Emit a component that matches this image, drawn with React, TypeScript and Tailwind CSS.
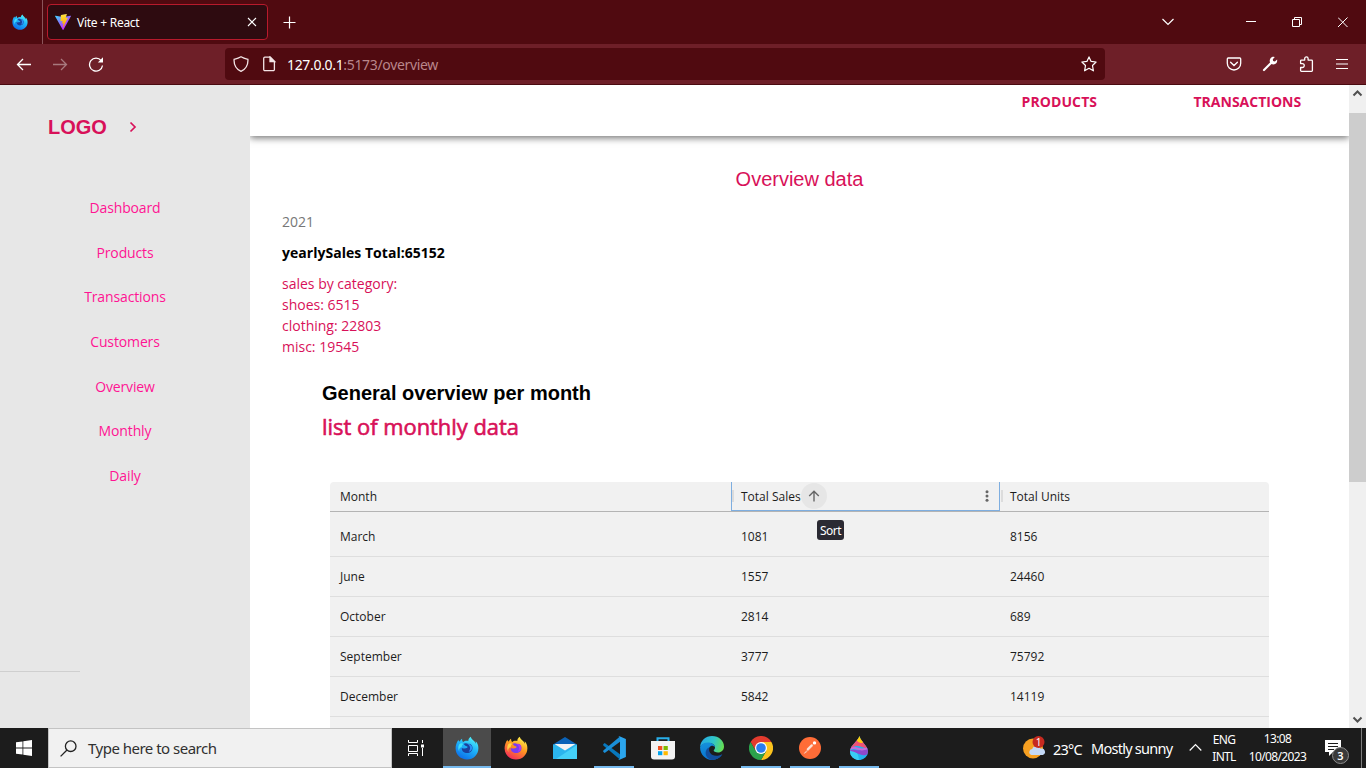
import React, { useId } from "react";

const UI = "font-['Open_Sans',sans-serif]";
const SYS = "font-['Noto_Sans',sans-serif]";
const ARIAL = "font-['Liberation_Sans',sans-serif]";

function Firefox({ size, blue = false }: { size: number; blue?: boolean }) {
  const id = useId();
  const c = blue
    ? ["#4ff0fa", "#1fb4f8", "#0b6ae8", "#1a3f9c", "#2a8ff5"]
    : ["#fff04d", "#ff9a1f", "#f5245d", "#7a3cf0", "#b03af0"];
  return (
    <svg width={size} height={size} viewBox="0 0 24 24" className="shrink-0">
      <defs>
        <linearGradient id={id} x1="0.8" y1="0" x2="0.25" y2="1">
          <stop offset="0.05" stopColor={c[0]} />
          <stop offset="0.45" stopColor={c[1]} />
          <stop offset="1" stopColor={c[2]} />
        </linearGradient>
      </defs>
      <path
        fill={`url(#${id})`}
        d="M15.7.7c-1.8 1.2-2.4 2.7-2.4 4.2-2.2-.6-4 .1-5 1-1-.6-1.3-1.8-1.2-3.2C5.900 3.300 5.200 4.400 4.800 5.400 4 5.400 3.600 4.600 3.500 3.700 1.600 6 .5 9.500.6 12.600.7 19 5.700 23.500 12 23.500c6.500 0 11.400-5 11.400-11.300 0-3-1-5.400-2.800-7 .3 1 .4 1.900.4 2.600-1.200-3.200-4.500-3.900-5.300-7.100z"
      />
      <path fill={c[3]} d="M8.300 8c1.500-1 3.500-.9 5-.1 2.300-.3 4.300 1.500 4.200 4.200-.1 3.200-2.500 5-5.200 5-3.300 0-5.800-2.300-5.500-5.200.2 0 1 1 3.100.6 1.500-.3 2.700-.9 2.700-1.600-.1-.6-1.700-.4-2.500-1.300C9.600 9 9.300 8.400 8.300 8z" />
      <path fill={c[4]} d="M12.500 8c3-.2 4.900 1.600 4.600 4.400-.3 2.100-1.800 3.300-3.500 3.200 2-1.800 2.300-5.700-1.100-7.600z" />
      <path fill={c[0]} opacity=".75" d="M4.300 8.200C5.500 7 7 6.700 8.300 8c-1.200.8-1.600 2-1.500 3.300C5 11.300 3.600 13 4.500 16 2.700 13.600 2.900 10.200 4.300 8.200z" />
    </svg>
  );
}

function ViteLogo() {
  return (
    <svg width="16" height="16" viewBox="0 0 256 257" className="shrink-0">
      <defs>
        <linearGradient id="va" x1="-.8%" x2="57.600%" y1="7.600%" y2="78.400%">
          <stop offset="0%" stopColor="#41D1FF" />
          <stop offset="100%" stopColor="#BD34FE" />
        </linearGradient>
        <linearGradient id="vb" x1="43.400%" x2="50.300%" y1="2.200%" y2="89%">
          <stop offset="0%" stopColor="#FFEA83" />
          <stop offset="8%" stopColor="#FFDD35" />
          <stop offset="100%" stopColor="#FFA800" />
        </linearGradient>
      </defs>
      <path fill="url(#va)" d="M255.153 37.938 134.897 252.976c-2.483 4.440-8.862 4.466-11.382.048L.875 37.958c-2.746-4.814 1.371-10.646 6.827-9.670l120.385 21.517a6.537 6.537 0 0 0 2.322-.004l117.867-21.483c5.438-.991 9.574 4.796 6.877 9.620Z" />
      <path fill="url(#vb)" d="M185.432.063 96.440 17.501a3.268 3.268 0 0 0-2.634 3.014l-5.474 92.456a3.268 3.268 0 0 0 3.997 3.378l24.777-5.718c2.318-.535 4.413 1.507 3.936 3.838l-7.361 36.047c-.495 2.426 1.782 4.500 4.151 3.780l15.304-4.649c2.372-.720 4.652 1.360 4.150 3.788l-11.698 56.621c-.732 3.542 3.979 5.473 5.943 2.437l1.313-2.028 72.516-144.720c1.215-2.423-.880-5.186-3.540-4.672l-25.505 4.922c-2.396.462-4.435-1.770-3.759-4.114l16.646-57.705c.677-2.350-1.370-4.583-3.769-4.113Z" />
    </svg>
  );
}

function TitleBar() {
  return (
    <div className="flex h-11 shrink-0 bg-[#500a10] text-white">
      <div className="flex w-[43px] items-center border-r border-[#8b555a] pl-[12px]">
        <Firefox size={16} blue />
      </div>
      <div className="ml-1 mt-1 flex h-9 w-[221px] items-center rounded border border-[#b81a2c] bg-[#2e0b10] pl-[7px] pr-[9px]">
        <ViteLogo />
        <span className={`${SYS} ml-[6px] grow pt-[2px] text-[12px] tracking-[-0.26px]`}>Vite + React</span>
        <svg width="12" height="12" viewBox="0 0 12 12" stroke="#fff" strokeWidth="1.100">
          <path d="M2 2l8 8M10 2l-8 8" />
        </svg>
      </div>
      <svg className="ml-[15px] mt-4" width="13" height="13" viewBox="0 0 13 13" stroke="#fff" strokeWidth="1.200">
        <path d="M6.500.500v12M.5 6.500h12" />
      </svg>
      <svg className="ml-auto mt-[17px]" width="14" height="10" viewBox="0 0 14 10" fill="none" stroke="#fff" strokeWidth="1.200">
        <path d="M1.500 2L7 7.500 12.500 2" />
      </svg>
      <svg className="ml-[71px] mt-4" width="10" height="11" viewBox="0 0 10 11" stroke="#fff">
        <path d="M0 5.500h10" />
      </svg>
      <svg className="ml-9 mt-[17px]" width="11" height="11" viewBox="0 0 11 11" fill="none" stroke="#fff">
        <path d="M.5 2.500h7v7h-7zM2.500 2.500v-2h7v7h-2" />
      </svg>
      <svg className="ml-[35px] mr-[17px] mt-[17px]" width="11" height="11" viewBox="0 0 11 11" stroke="#fff">
        <path d="M0 .5l9.500 9.500M9.500.5L0 10" />
      </svg>
    </div>
  );
}

function Toolbar() {
  return (
    <div className="flex h-[41px] shrink-0 items-center border-b border-[#4a0a10] bg-[#6e1f28] text-white">
      <svg className="ml-4" width="16" height="16" viewBox="0 0 16 16" fill="none" stroke="#fff" strokeWidth="1.300">
        <path d="M15 8.500H1.500M7 3L1.500 8.500 7 14" />
      </svg>
      <svg className="ml-5 opacity-40" width="16" height="16" viewBox="0 0 16 16" fill="none" stroke="#fff" strokeWidth="1.300">
        <path d="M1 8.500h13.500M9 3L14.500 8.500 9 14" />
      </svg>
      <svg className="ml-5" width="16" height="16" viewBox="0 0 16 16" fill="none" stroke="#fff" strokeWidth="1.300">
        <path d="M13.200 4.700A6.500 6.500 0 1 0 14.500 9.500" />
        <path d="M9.800 6.500h5.200V1.200z" fill="#fff" stroke="none" />
      </svg>
      <div className="ml-[121px] flex h-8 w-[880px] items-center rounded bg-[#500a10]">
        <svg className="ml-2" width="16" height="16" viewBox="0 0 16 16" fill="none" stroke="#f3e4e5" strokeWidth="1.300">
          <path d="M8 .8C10 2.100 12.500 2.800 14.900 3.300c.3 4.700-1.600 9.600-6.900 12C2.700 12.900.8 8 1.100 3.300 3.500 2.800 6 2.100 8 .8z" />
        </svg>
        <svg className="ml-3" width="16" height="16" viewBox="0 0 16 16" fill="none" stroke="#f3e4e5" strokeWidth="1.300">
          <path d="M3.900 1.200h5.300l4.200 4.200v8.100a1.200 1.200 0 0 1-1.200 1.200H3.900a1.200 1.200 0 0 1-1.200-1.200V2.400a1.200 1.200 0 0 1 1.200-1.200z" />
          <path d="M9 1v4.700h4.700z" fill="#f3e4e5" />
        </svg>
        <span className={`${SYS} ml-[10px] pt-px text-[14px] tracking-[-0.33px] text-[#b9868b]`}>
          <span className="text-white">127.0.0.1</span>:5173/overview
        </span>
        <svg className="ml-auto mr-2" width="16" height="16" viewBox="0 0 16 16" fill="none" stroke="#fff" strokeWidth="1.200" strokeLinejoin="round">
          <path d="M8 .9l2.100 4.500 5 .6-3.600 3.500.9 5.300L8 12.300l-4.400 2.500.9-5.300L.9 6l5-.6z" />
        </svg>
      </div>
      <svg className="ml-[121px]" width="16" height="16" viewBox="0 0 16 16" fill="none" stroke="#fff" strokeWidth="1.300">
        <path d="M2.200 2h11.600a.9.9 0 0 1 .9.9v4.400a6.700 6.700 0 0 1-13.400 0V2.900a.9.9 0 0 1 .9-.9z" />
        <path d="M4.600 6.200L8 9.500l3.400-3.300" strokeLinecap="round" />
      </svg>
      <svg className="ml-5" width="16" height="16" viewBox="0 0 16 16">
        <path d="M2 14L9 7" stroke="#fff" strokeWidth="2.200" strokeLinecap="round" />
        <path fill="#fff" d="M11.600.8l1.200.2-2 2.300.3 1.800 1.800.3 2.200-2c.3 1.800-.2 3.500-1.600 4.400-1.300.9-2.800.9-4.200.2L8.200 6.800C7.500 5.400 7.500 3.900 8.400 2.500c.8-1.200 2-1.800 3.200-1.700z" />
      </svg>
      <svg className="ml-[21px]" width="16" height="16" viewBox="0 0 16 16" fill="none" stroke="#fff" strokeWidth="1.300" strokeLinejoin="round">
        <path d="M1.600 7.600V4.900a.8.800 0 0 1 .8-.8h3.300V2.600a1.700 1.700 0 0 1 3.400 0v1.500h3.500a.8.800 0 0 1 .8.800v9.600a.8.800 0 0 1-.8.800H2.400a.8.800 0 0 1-.8-.8v-3h1.700a1.900 1.900 0 0 0 0-3.900z" />
      </svg>
      <svg className="ml-[19px]" width="16" height="16" viewBox="0 0 16 16" stroke="#fff" strokeWidth="1.200">
        <path d="M2 3.500h12M2 8h12M2 12.500h12" />
      </svg>
    </div>
  );
}

const links = ["Dashboard", "Products", "Transactions", "Customers", "Overview", "Monthly", "Daily"];

function Sidebar() {
  return (
    <aside className="flex w-[250px] shrink-0 flex-col bg-[#e7e7e7]">
      <div className="mt-[29px] flex h-6 items-center pl-12 text-[#d81159]">
        <span className={`${ARIAL} pt-[2px] text-[20px] font-bold`}>LOGO</span>
        <svg className="ml-[22.500px] mt-[2px]" width="8" height="12" viewBox="0 0 8 12" fill="none" stroke="#d81159" strokeWidth="1.700">
          <path d="M1.500 1.500L6 6l-4.500 4.500" />
        </svg>
      </div>
      <nav className={`${UI} mt-[48px] flex flex-col items-center text-[14px] tracking-[-0.13px] text-[#ff1493]`}>
        {links.map((l) => (
          <a key={l} className="h-[44.670px] leading-[44px]">{l}</a>
        ))}
      </nav>
      <div className="mt-[172px] w-20 border-t border-[#cfcfcf]" />
    </aside>
  );
}

const rows = [
  ["March", "1081", "8156"],
  ["June", "1557", "24460"],
  ["October", "2814", "689"],
  ["September", "3777", "75792"],
  ["December", "5842", "14119"],
];

function Grid() {
  return (
    <div className={`${UI} ml-20 mt-[40px] w-[939px] rounded-t bg-[#f1f1f1] text-[12px] text-[#1c1c1c]`}>
      <div className="flex h-[30px] border-b border-[#b4b4b4]">
        <div className="flex w-[401px] items-center pl-[10px]">Month</div>
        <div className="relative flex h-[29px] w-[269px] items-center border-x border-b border-x-[#7eaee0] border-b-[#7eaee0] pl-[9px]">
          <span className="absolute left-0 top-2 h-3 w-[2px] bg-[#dcdcdc]" />
          <span className="w-[60px] whitespace-nowrap pt-px">Total Sales</span>
          <span className="flex size-[26px] items-center justify-center rounded-full bg-[#e6e6e6]">
            <svg className="mr-px" width="12" height="12" viewBox="0 0 12 12" fill="none" stroke="#666" strokeWidth="1.400">
              <path d="M6 11.500V1.500M1.200 6L6 1.200 10.800 6" />
            </svg>
          </span>
          <svg className="ml-auto mr-[10.500px]" width="4" height="12" viewBox="0 0 4 12" fill="#666">
            <circle cx="2" cy="1.700" r="1.500" />
            <circle cx="2" cy="6" r="1.500" />
            <circle cx="2" cy="10.300" r="1.500" />
          </svg>
          <span className={`${SYS} absolute left-[85px] top-[38px] z-10 flex h-5 w-[27px] items-center justify-center rounded-[3px] bg-[#2b2a33] pt-px text-[12px] tracking-[-0.5px] text-white`}>Sort</span>
        </div>
        <span className="ml-px mt-2 h-3 w-[2px] bg-[#dcdcdc]" />
        <div className="flex items-center pl-[7px]">Total Units</div>
      </div>
      {rows.map((r, i) => (
        <div key={r[0]} className={`flex items-center border-b border-[#dedede] pl-[10px] ${i === 0 ? "h-[45px] pt-[5px]" : "h-10"}`}>
          <span className="w-[401px]">{r[0]}</span>
          <span className="w-[269px]">{r[1]}</span>
          <span>{r[2]}</span>
        </div>
      ))}
      <div className="h-10" />
    </div>
  );
}

function Scrollbar() {
  return (
    <div className="flex w-[17px] shrink-0 flex-col bg-[#f0f0f0]">
      <svg width="17" height="28" viewBox="0 0 17 28" fill="none" stroke="#505050" strokeWidth="2">
        <path d="M4.500 10.500l4-4 4 4" />
      </svg>
      <div className="h-[369px] bg-[#cdcdcd]" />
      <svg className="mt-auto" width="17" height="17" viewBox="0 0 17 17" fill="none" stroke="#505050" strokeWidth="2">
        <path d="M4.500 6.500l4 4 4-4" />
      </svg>
    </div>
  );
}

function Page() {
  return (
    <main className="flex min-w-0 grow flex-col overflow-hidden bg-white">
      <header className={`${UI} relative flex h-[51px] shrink-0 bg-white pl-[771.500px] text-[14px] font-bold leading-[34px] text-[#d81159] shadow-[0_2px_7px_rgba(0,0,0,0.55)]`}>
        <span className="w-[172px] tracking-[0.1px]">PRODUCTS</span>
        <span>TRANSACTIONS</span>
      </header>
      <h1 className={`${ARIAL} mt-[31px] text-center text-[20px] leading-6 text-[#d81159]`}>Overview data</h1>
      <section className={`${UI} mt-[20px] pl-8 text-[14px] leading-[21px] text-[#d81159]`}>
        <p className="text-[#777]">2021</p>
        <p className="my-[10px] font-bold tracking-[0.03px] text-black">yearlySales Total:65152</p>
        <p>sales by category:</p>
        <p>shoes: 6515</p>
        <p>clothing: 22803</p>
        <p>misc: 19545</p>
      </section>
      <h2 className={`${ARIAL} mt-6 pl-[72px] text-[20px] font-bold leading-6 text-black`}>General overview per month</h2>
      <h3 className={`${UI} mt-[7px] pl-[72px] text-[21.900px] font-normal leading-[30px] text-[#d81159] [-webkit-text-stroke:0.600px_#d81159]`}>list of monthly data</h3>
      <Grid />
    </main>
  );
}

function Mail() {
  return (
    <svg width="24" height="24" viewBox="0 0 24 24">
      <path fill="#0b63b8" d="M0 8.500L12 1l12 7.500V12H0z" />
      <path fill="#2bb5ee" d="M0 8.500h24V23H0z" />
      <path fill="#44d0f8" d="M24 9v14H3z" />
      <path fill="#f4f4f4" d="M1.500 8h21L12 14.500z" />
    </svg>
  );
}

function VsCode() {
  return (
    <svg width="24" height="24" viewBox="0 0 24 24">
      <path fill="#0878bd" d="M1.200 8.200L2.700 6.900 18 18.200v5.300L1.300 9.500z" />
      <path fill="#1a8fd8" d="M1.200 15.800l1.500 1.300L18 5.800V.5L1.300 14.500z" />
      <path fill="#2ba5ed" d="M17.500.2L23.900 3v18l-6.400 2.800c-.5.100-1-.2-1.500-.7 1 .4 2 0 2-1V2c0-1-1-1.500-2-1 .5-.5 1-.9 1.500-.8z" />
    </svg>
  );
}

function Store() {
  return (
    <svg width="24" height="24" viewBox="0 0 24 24">
      <path fill="none" stroke="#28afea" strokeWidth="2" d="M6.500 6V2.200h11V6" />
      <path fill="#f3f3f3" d="M0 5h24v15.500a3 3 0 0 1-3 3H3a3 3 0 0 1-3-3z" />
      <path fill="#f25022" d="M7 10h4.300v4H7z" />
      <path fill="#7fba00" d="M12.500 10h4.300v4h-4.300z" />
      <path fill="#00a4ef" d="M7 15.200h4.300v4H7z" />
      <path fill="#ffb900" d="M12.500 15.200h4.300v4h-4.300z" />
    </svg>
  );
}

function Edge() {
  return (
    <svg width="24" height="24" viewBox="0 0 24 24">
      <defs>
        <linearGradient id="eg" x1="0" y1=".3" x2="1" y2=".5">
          <stop offset="0" stopColor="#25a9e6" />
          <stop offset=".55" stopColor="#30c6c8" />
          <stop offset="1" stopColor="#65de52" />
        </linearGradient>
        <linearGradient id="eh" x1="0" y1="0" x2=".3" y2="1">
          <stop offset="0" stopColor="#1693dc" />
          <stop offset="1" stopColor="#0872d0" />
        </linearGradient>
      </defs>
      <path fill="url(#eg)" d="M.1 11C.6 4.700 5.600.1 12 .1c7 0 12 5 12 10.300 0 3.500-2.600 6-6 6-2.700 0-4.300-1-4.300-1.900 0-.5 1.300-.9 1.300-3C15 9 12.500 7 9 7 4.500 7 1.300 8.600.1 11z" />
      <path fill="url(#eh)" d="M.1 11C1.200 8.300 4.300 6.600 7.600 6.600c4.100 0 7.200 2.100 7.400 4.700-.8-1-1.900-1.500-2.700-1.500-2 0-4 2.300-4 5 0 4 3.500 7.200 8.200 6.400 2-.3 4-1.500 5-2.100C19.800 22 16.400 24 12 24 5.300 24-.2 18.200.1 11z" />
      <path fill="#124e9d" d="M9.600 11.200c-1.800 4.200 1.400 8.500 6.500 8.500 2 0 4-.6 5.500-1.300.5-.2.8.2.4.7-2.100 2.900-5.800 4.900-9.900 4.900-4-.7-6.600-3.900-6.500-7.300.1-2.700 1.600-4.600 4-5.500z" />
    </svg>
  );
}

function Chrome() {
  return (
    <svg width="24" height="24" viewBox="0 0 24 24">
      <path fill="#e33b2e" d="M1.600 6A12 12 0 0 1 22.400 6H12L6.800 15z" />
      <path fill="#fcc31e" d="M22.400 6A12 12 0 0 1 12 24l5.200-9L12 6z" />
      <path fill="#2ba24c" d="M1.600 6A12 12 0 0 0 12 24l5.200-9H6.800z" />
      <circle cx="12" cy="12" r="6" fill="#fff" />
      <circle cx="12" cy="12" r="4.800" fill="#2a7df0" />
    </svg>
  );
}

function Postman() {
  return (
    <svg width="24" height="24" viewBox="0 0 24 24">
      <circle cx="12" cy="12" r="11" fill="#ff6c37" />
      <circle cx="16.500" cy="6.900" r="1.700" fill="#fff" />
      <path d="M13.800 9.300L9.800 13.300" stroke="#fde3d9" strokeWidth="2.200" strokeLinecap="round" />
      <path d="M14.600 9.800L9 15.500 6.300 17.400 8.800 14.400" fill="none" stroke="#fde3d9" strokeWidth=".6" />
    </svg>
  );
}

function Paint() {
  return (
    <svg width="24" height="24" viewBox="0 0 24 24">
      <defs>
        <clipPath id="drop">
          <path d="M12.500 0C11 5 3 9.500 3 15.500A9 8.600 0 0 0 21 15.500C21 10 14 6 12.500 0z" />
        </clipPath>
      </defs>
      <g clipPath="url(#drop)">
        <path fill="#22b2ee" d="M0 0h24v24H0z" />
        <path fill="#39cdf4" d="M3 14c6 1 8 2 9 10H3z" />
        <path fill="#8e48cc" d="M2 15c5-4 9 3 20-4v6c-7 6-12-2-20-2z" />
        <path fill="#c26cdd" d="M3 10c6-1 9 5 18 1v2c-9 4-12-2-18 1z" />
        <path fill="#ee5276" d="M3 3h18v9C15 13 12 7 4 12z" />
        <path fill="#ffcf0a" d="M9 0h7v6.500c-2 1-5 0-6-2z" />
      </g>
    </svg>
  );
}

const apps = [
  { icon: <Firefox size={24} blue />, state: "current" },
  { icon: <Firefox size={24} />, state: "" },
  { icon: <Mail />, state: "" },
  { icon: <VsCode />, state: "open" },
  { icon: <Store />, state: "" },
  { icon: <Edge />, state: "" },
  { icon: <Chrome />, state: "open" },
  { icon: <Postman />, state: "open" },
  { icon: <Paint />, state: "open" },
];

function Taskbar() {
  return (
    <footer className={`${SYS} flex h-10 shrink-0 bg-[#1c1c1c] text-white`}>
      <div className="flex w-12 items-center justify-center">
        <svg width="16" height="16" viewBox="0 0 16 16" fill="#fff">
          <path d="M0 2.300l6.500-.9v6.200H0zM7.300 1.300L16 0v7.600H7.300zM0 8.400h6.500v6.200L0 13.700zM7.300 8.400H16V16l-8.700-1.300z" />
        </svg>
      </div>
      <div className="flex w-[344px] items-center border border-[#c3c3c3] bg-[#f1f1f1] pl-[11px]">
        <svg width="17" height="17" viewBox="0 0 17 17" fill="none" stroke="#222" strokeWidth="1.300">
          <circle cx="10.700" cy="6.200" r="5.300" />
          <path d="M7 10L.6 16.400" />
        </svg>
        <span className="ml-[11px] text-[15px] tracking-[-0.51px] text-[#303030]">Type here to search</span>
      </div>
      <div className="flex w-12 items-center justify-center">
        <svg width="16" height="16" viewBox="0 0 16 16" fill="none" stroke="#fff">
          <path d="M.5 0v2.500h9V0M.5 5.500h9v6h-9zM.5 16v-2.500h9V16M14.500 0v3M14.500 8v8" />
          <path fill="#fff" stroke="none" d="M13 4.500h3v3h-3z" />
        </svg>
      </div>
      <div className="ml-[3px] flex gap-px">
        {apps.map((a, i) => (
          <div key={i} className={`flex w-12 flex-col items-center ${a.state === "current" ? "bg-[#4b4b4b]" : ""}`}>
            <div className="flex h-[38px] items-center pt-[2px]">{a.icon}</div>
            {a.state === "current" && <div className="h-[2px] w-12 bg-[#76b9ed]" />}
            {a.state === "open" && <div className="h-[2px] w-10 bg-[#76b9ed]" />}
          </div>
        ))}
      </div>
      <svg className="ml-auto mt-[7px]" width="24" height="26" viewBox="0 0 24 26">
        <circle cx="11" cy="13.500" r="10" fill="#f7a021" />
        <path d="M9.500 20a3 3 0 0 1 .7-5.900 4.500 4.500 0 0 1 8.400-.3 3.200 3.200 0 0 1 2.200 6.200z" fill="#c4d9f7" />
        <circle cx="16.500" cy="7" r="6" fill="#c62a20" />
        <text x="16.500" y="10.500" fontSize="10" textAnchor="middle" fill="#fff" fontFamily="Noto Sans">1</text>
      </svg>
      <span className="ml-[7px] w-[30px] whitespace-nowrap text-[14.500px] leading-[42px] tracking-[-0.75px]">23°C</span>
      <span className="ml-[8px] w-[82px] whitespace-nowrap text-[14.500px] leading-[41px] tracking-[-0.74px]">Mostly sunny</span>
      <svg className="ml-[16px] mt-[15px]" width="13" height="9" viewBox="0 0 13 9" fill="none" stroke="#fff" strokeWidth="1.200">
        <path d="M.7 7.500l5.800-5.800 5.800 5.800" />
      </svg>
      <div className="ml-[10px] flex w-[24px] flex-col pt-[3px] text-center text-[12px] leading-[17px] tracking-[-0.7px]">
        <span>ENG</span><span>INTL</span>
      </div>
      <div className="ml-[12px] flex w-[59px] flex-col whitespace-nowrap pt-[2px] text-center text-[12px] leading-[18px] tracking-[-0.62px]">
        <span>13:08</span><span>10/08/2023</span>
      </div>
      <svg className="ml-[17px] mt-3" width="26" height="25" viewBox="0 0 26 25">
        <path fill="#fff" d="M1 0h16v12H9l-4 4v-4H1z" />
        <path stroke="#1c1c1c" d="M4 3.500h10M4 6.500h10M4 9.500h6" />
        <circle cx="16.500" cy="15.500" r="8" fill="#3a3a3a" stroke="#8c8c8c" />
        <text x="16.500" y="19.500" fontSize="11" fontWeight="600" textAnchor="middle" fill="#fff" fontFamily="Noto Sans">3</text>
      </svg>
      <div className="ml-[11px] mr-1 w-px bg-[#7d7d7d]" />
    </footer>
  );
}

export default function App() {
  return (
    <div className="flex h-[768px] w-[1366px] flex-col overflow-hidden bg-white">
      <TitleBar />
      <Toolbar />
      <div className="flex min-h-0 grow">
        <Sidebar />
        <Page />
        <Scrollbar />
      </div>
      <Taskbar />
    </div>
  );
}
